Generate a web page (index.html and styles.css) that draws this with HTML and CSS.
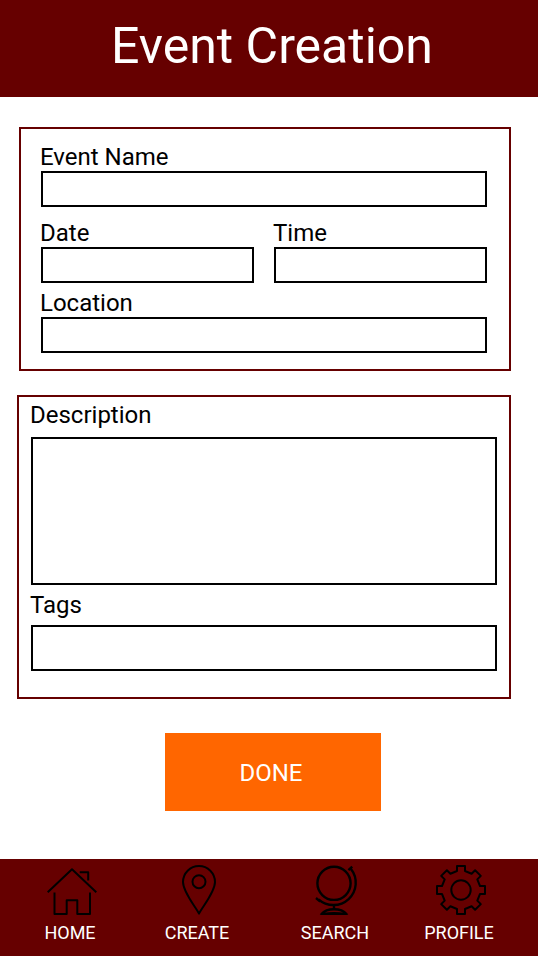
FILE: index.html
```html
<!DOCTYPE html>
<html lang="en">
<head>
<meta charset="utf-8">
<meta name="viewport" content="width=device-width, initial-scale=1">
<title>Event Creation</title>
<link rel="stylesheet" href="styles.css">
</head>
<body>
<header class="header"><h1 class="title">Event Creation</h1></header>
<main class="main">
  <form class="form">
    <section class="card card-basics">
      <div class="field">
        <label for="name">Event Name</label>
        <input id="name" type="text">
      </div>
      <div class="row">
        <div class="field">
          <label for="date">Date</label>
          <input id="date" type="text">
        </div>
        <div class="field">
          <label for="time">Time</label>
          <input id="time" type="text">
        </div>
      </div>
      <div class="field">
        <label for="location">Location</label>
        <input id="location" type="text">
      </div>
    </section>
    <section class="card card-details">
      <div class="field">
        <label for="description">Description</label>
        <textarea id="description"></textarea>
      </div>
      <div class="field">
        <label for="tags">Tags</label>
        <input id="tags" type="text">
      </div>
    </section>
    <button class="done" type="submit">DONE</button>
  </form>
</main>
<nav class="nav">
  <a class="nav-item" href="#home">
    <svg class="icon" viewBox="0 0 50 50" aria-hidden="true">
      <path d="M.7 27.3 25 4.3l24.3 23M32.7 7.2h8.5v8.4M7.5 27.5V49h12.2V35.2h10.6V49H43V27.5"/>
    </svg>
    HOME
  </a>
  <a class="nav-item" href="#create">
    <svg class="icon" viewBox="0 0 50 50" aria-hidden="true">
      <path d="M25 48.600C21 41 9 27 9 17a16 16 0 0 1 32 0c0 10-12 24-16 31.600Z"/>
      <circle cx="25" cy="16.700" r="6.500"/>
    </svg>
    CREATE
  </a>
  <a class="nav-item" href="#search">
    <svg class="icon icon-globe" viewBox="0 0 50 50" aria-hidden="true">
      <circle cx="22" cy="18.300" r="16.600"/>
      <path d="M39 4A22.300 22.300 0 0 1 6.500 34.300M36.400 5.200l3.800-3.600M4 33l4.200 3.600M22 40.500v3.500"/>
      <path d="M9.500 49c2.500-3 7.500-4.800 12.500-4.800S32 46 34.500 49Z"/>
      <path class="solid" d="M7.500 50c3-2 8-3 14.500-3s11.500 1 14.500 3Z"/>
    </svg>
    SEARCH
  </a>
  <a class="nav-item" href="#profile">
    <svg class="icon" viewBox="0 0 50 50" aria-hidden="true">
      <path d="M21 6V1h8v5l6.600 2.700 3.500-3.500 5.700 5.700-3.500 3.500L44 21h5v8h-5l-2.700 6.600 3.500 3.500-5.700 5.700-3.500-3.500L29 44v5h-8v-5l-6.600-2.700-3.500 3.500-5.700-5.700 3.500-3.500L6 29H1v-8h5l2.700-6.600-3.500-3.500 5.700-5.700 3.500 3.500Z"/>
      <circle cx="25" cy="25" r="9.700"/>
    </svg>
    PROFILE
  </a>
</nav>
</body>
</html>
```
FILE: styles.css
```css
* { box-sizing: border-box; }

body {
  margin: 0;
  min-height: 100vh;
  display: flex;
  flex-direction: column;
  background: #fff;
  color: #000;
  font-family: Roboto, sans-serif;
  font-size: 24px;
  line-height: 28px;
}

.header {
  padding: 16px 0 21px 6px;
  background: #600;
  color: #fff;
  text-align: center;
}

.title {
  margin: 0;
  font-size: 50px;
  font-weight: 400;
  line-height: 60px;
}

.main {
  flex: 1;
  padding: 30px 27px 48px 17px;
}

.form,
.field,
.card {
  display: flex;
  flex-direction: column;
}

.form { gap: 24px; }

.card { border: 2px solid #600; }

.card-basics {
  margin-left: 2px;
  padding: 14px 22px 16px 20px;
  gap: 6px;
}

.card-details {
  padding: 4px 12px 26px;
  gap: 6px;
}

.card-details .field { gap: 6px; }

.card-details textarea { margin-top: 2px; }

.row {
  display: grid;
  grid-template-columns: 1fr 1fr;
  gap: 20px;
  padding-top: 6px;
}

label { margin-left: -1px; }

input,
textarea {
  display: block;
  width: 100%;
  height: 36px;
  margin: 0;
  padding: 0 8px;
  border: 2px solid #000;
  border-radius: 0;
  background: #fff;
  font: inherit;
  resize: none;
}

textarea { height: 148px; }

.card-details input { height: 46px; }

.done {
  align-self: center;
  width: 216px;
  height: 78px;
  margin: 10px 0 0 18px;
  padding: 2px 4px 0 0;
  border: 0;
  background: #f60;
  color: #fff;
  font: inherit;
}

.nav {
  display: grid;
  grid-template-columns: 124fr 130fr 146fr 102fr;
  padding: 6px 28px 13px 8px;
  background: #600;
}

.nav-item {
  display: flex;
  flex-direction: column;
  align-items: center;
  gap: 7px;
  color: #fff;
  font-size: 18px;
  line-height: 21px;
  text-decoration: none;
}

.icon {
  width: 50px;
  height: 50px;
  margin-left: 4px;
  fill: none;
  stroke: #000;
  stroke-width: 2;
  stroke-linejoin: round;
}

.icon-globe { stroke-width: 2.4; }

.icon .solid {
  fill: #000;
  stroke: none;
}
```
